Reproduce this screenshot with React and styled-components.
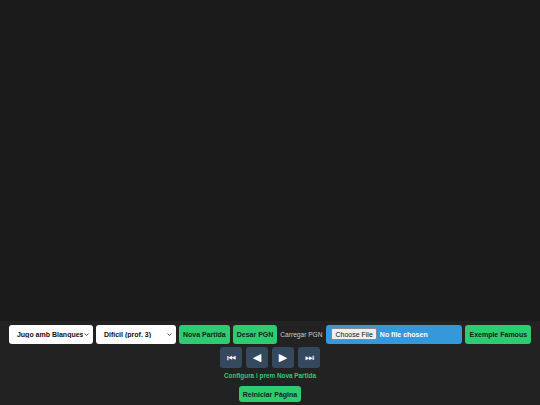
import React from "react";
import styled, { createGlobalStyle } from "styled-components";

const GlobalStyle = createGlobalStyle`
  html, body {
    margin: 0;
    padding: 0;
    background: #1b1b1b;
    font-family: "Liberation Sans", Arial, sans-serif;
  }
`;

const Page = styled.div`
  display: flex;
  flex-direction: column;
  min-height: 405px;
`;

const BoardArea = styled.div`
  height: 321px;
  background: #1b1b1b;
`;

const Controls = styled.div`
  flex: 1;
  background: #222222;
  padding: 4px 4px 4px;
  display: flex;
  flex-direction: column;
  align-items: center;
`;

const Toolbar = styled.div`
  display: flex;
  flex-wrap: wrap;
  justify-content: center;
  align-items: center;
  gap: 3px;
`;

const SelectWrap = styled.div`
  position: relative;
  display: flex;
`;

const Select = styled.select`
  appearance: none;
  width: ${(p) => p.$w}px;
  height: 19px;
  border: none;
  border-radius: 3px;
  background: #ffffff;
  color: #111;
  font-family: inherit;
  font-size: 7px;
  font-weight: bold;
  padding: 0 10px 0 8px;
  outline: none;
`;

const Chevron = styled.svg`
  position: absolute;
  right: 4px;
  top: 8px;
  width: 5px;
  height: 3px;
  pointer-events: none;
`;

const Button = styled.button`
  height: ${(p) => (p.$small ? 16 : 19)}px;
  padding: 0 4px;
  border: none;
  border-radius: 3px;
  background: #2ecc71;
  color: #10261a;
  font-family: inherit;
  font-size: 7px;
  font-weight: bold;
  cursor: pointer;
  white-space: nowrap;
`;

const Label = styled.span`
  color: #cccccc;
  font-size: 6.6px;
  margin-right: 1px;
`;

const FileInput = styled.input`
  width: 136px;
  height: 19px;
  box-sizing: border-box;
  padding: 0 5px;
  border: none;
  border-radius: 3px;
  background: #3498db;
  color: #ffffff;
  font-family: inherit;
  font-size: 7px;
  font-weight: bold;

  &::file-selector-button {
    font-family: inherit;
    font-size: 7px;
    font-weight: normal;
    height: 12px;
    padding: 0 3px;
    margin: 3px 3px 0 0;
    border: 1px solid #8a8a8a;
    border-radius: 2px;
    background: #efefef;
    color: #111;
  }
`;

const NavRow = styled.div`
  display: flex;
  gap: 4px;
  margin-top: 3px;
`;

const NavButton = styled.button`
  width: 22px;
  height: 21px;
  padding: 0;
  border: none;
  border-radius: 3px;
  background: #34495e;
  color: #ffffff;
  font-family: "DejaVu Sans", sans-serif;
  font-size: ${(p) => (p.$big ? 11 : 10)}px;
  line-height: 21px;
  cursor: pointer;
`;

const Status = styled.div`
  margin-top: 3px;
  color: #2ecc71;
  font-size: 6.4px;
  font-weight: bold;
  line-height: 9px;
`;

const ResetWrap = styled.div`
  display: flex;
  margin-top: 6px;
`;

function Dropdown({ width, value, options }) {
  return (
    <SelectWrap>
      <Select $w={width} defaultValue={value}>
        {options.map(([v, label]) => (
          <option key={v} value={v}>
            {label}
          </option>
        ))}
      </Select>
      <Chevron viewBox="0 0 5 3">
        <path d="M0.5 0.5 L2.5 2.5 L4.5 0.5" fill="none" stroke="#444" strokeWidth="0.9" />
      </Chevron>
    </SelectWrap>
  );
}

export default function App() {
  return (
    <>
      <GlobalStyle />
      <Page>
        <BoardArea />
        <Controls>
          <Toolbar>
            <Dropdown
              width={84}
              value="w"
              options={[
                ["w", "Jugo amb Blanques"],
                ["b", "Jugo amb Negres"],
              ]}
            />
            <Dropdown
              width={80}
              value="3"
              options={[
                ["1", "Fàcil (prof. 1)"],
                ["2", "Mitjà (prof. 2)"],
                ["3", "Difícil (prof. 3)"],
              ]}
            />
            <Button>Nova Partida</Button>
            <Button>Desar PGN</Button>
            <Label>Carregar PGN</Label>
            <FileInput type="file" accept=".pgn" />
            <Button>Exemple Famous</Button>
          </Toolbar>
          <NavRow>
            <NavButton>⏮</NavButton>
            <NavButton $big>◀</NavButton>
            <NavButton $big>▶</NavButton>
            <NavButton>⏭</NavButton>
          </NavRow>
          <Status>Configura i prem Nova Partida</Status>
          <ResetWrap>
            <Button $small>Reiniciar Pàgina</Button>
          </ResetWrap>
        </Controls>
      </Page>
    </>
  );
}
